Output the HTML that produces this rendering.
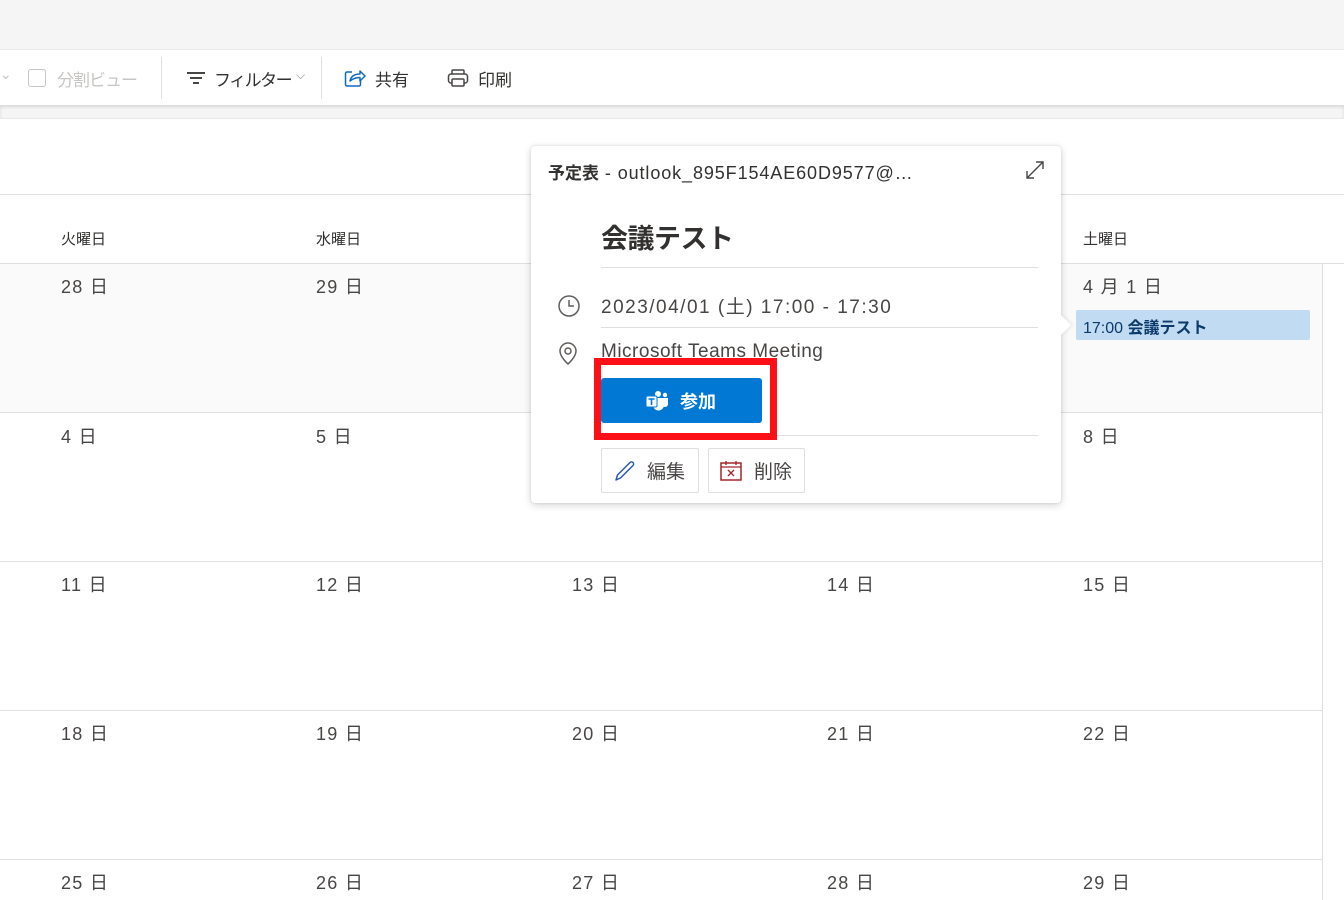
<!DOCTYPE html><html><head><meta charset="utf-8"><style>
*{margin:0;padding:0;box-sizing:border-box}
body{width:1344px;height:900px;overflow:hidden;background:#fff;font-family:"Liberation Sans","Noto Sans CJK JP",sans-serif;color:#323130;position:relative}
.a{position:absolute}
.hl{position:absolute;height:1px;background:#e1dfdd}
.d{position:absolute;font-size:18px;color:#484644;letter-spacing:1.3px}
.w{position:absolute;font-size:15px;color:#323130;top:228px}
</style></head><body>
<div class="a" style="left:0;top:0;width:1344px;height:49px;background:#f5f5f5"></div>
<div class="a" style="left:0;top:49px;width:1344px;height:1px;background:#e8e8e8"></div>
<div class="a" style="left:0;top:105px;width:1344px;height:13px;background:#f5f5f5;box-shadow:inset 0 2px 3px rgba(0,0,0,.12)"></div>
<div class="a" style="left:0;top:118px;width:1344px;height:1px;background:#e8e8e8"></div>
<!-- toolbar -->
<div class="a" style="left:0;top:66px;font-size:14px;color:#c8c6c4">⌄</div>
<div class="a" style="left:28px;top:69px;width:18px;height:18px;border:1.5px solid #c8c6c4;border-radius:3px"></div>
<div class="a" style="left:57px;top:66px;font-size:17px;color:#c8c6c4;letter-spacing:-1px">分割ビュー</div>
<div class="a" style="left:161px;top:57px;width:1px;height:42px;background:#e1dfdd"></div>
<div class="a" style="left:187px;top:72px;width:18px;height:13px">
<div class="a" style="left:0;top:0;width:18px;height:1.5px;background:#484644"></div>
<div class="a" style="left:3px;top:5px;width:12px;height:1.5px;background:#484644"></div>
<div class="a" style="left:6px;top:10px;width:6px;height:1.5px;background:#484644"></div></div>
<div class="a" style="left:214px;top:66px;font-size:17px;color:#323130;letter-spacing:-1.5px">フィルター</div>
<div class="a" style="left:296px;top:68px;font-size:12px;color:#8a8886">⌵</div>
<div class="a" style="left:321px;top:57px;width:1px;height:42px;background:#e1dfdd"></div>
<svg class="a" style="left:344px;top:68px" width="22" height="20" viewBox="0 0 22 20"><path d="M8 4H3a1.5 1.5 0 0 0-1.5 1.5v11A1.5 1.5 0 0 0 3 18h12a1.5 1.5 0 0 0 1.5-1.5V13" fill="none" stroke="#0f6cbd" stroke-width="1.5"/><path d="M6 13c1-5 5-7 10-7V3l5 5-5 5V9.5c-4 0-7 1-10 3.5z" fill="none" stroke="#0f6cbd" stroke-width="1.5" stroke-linejoin="round"/></svg>
<div class="a" style="left:375px;top:66px;font-size:17px">共有</div>
<svg class="a" style="left:447px;top:68px" width="22" height="20" viewBox="0 0 22 20"><rect x="5" y="2" width="12" height="5" rx="1" fill="none" stroke="#484644" stroke-width="1.5"/><rect x="1.5" y="6" width="19" height="9" rx="2.5" fill="#fff" stroke="#484644" stroke-width="1.5"/><rect x="5" y="11" width="12" height="7" rx="1" fill="#fff" stroke="#484644" stroke-width="1.5"/></svg>
<div class="a" style="left:478px;top:66px;font-size:17px">印刷</div>
<!-- calendar -->
<div class="hl" style="left:0;top:194px;width:1344px"></div>
<div class="w" style="left:61px">火曜日</div><div class="w" style="left:316px">水曜日</div><div class="w" style="left:1083px">土曜日</div>
<div class="hl" style="left:0;top:263px;width:1344px"></div>
<div class="a" style="left:0;top:264px;width:1322px;height:148px;background:#fafafa"></div>
<div class="hl" style="left:0;top:412px;width:1322px"></div>
<div class="hl" style="left:0;top:561px;width:1322px"></div>
<div class="hl" style="left:0;top:710px;width:1322px"></div>
<div class="hl" style="left:0;top:859px;width:1322px"></div>
<div class="a" style="left:1322px;top:264px;width:1px;height:636px;background:#e1dfdd"></div>
<div class="d" style="left:61px;top:273px">28 日</div><div class="d" style="left:316px;top:273px">29 日</div><div class="d" style="left:1083px;top:273px">4 月 1 日</div>
<div class="a" style="left:1076px;top:310px;width:234px;height:30px;background:#c0dbf2;border-radius:2px;font-size:16px;color:#0b3a6b;padding:4px 0 0 7px">17:00 <b>会議テスト</b></div>
<div class="d" style="left:61px;top:423px">4 日</div><div class="d" style="left:316px;top:423px">5 日</div><div class="d" style="left:1083px;top:423px">8 日</div>
<div class="d" style="left:61px;top:571px">11 日</div><div class="d" style="left:316px;top:571px">12 日</div><div class="d" style="left:572px;top:571px">13 日</div><div class="d" style="left:827px;top:571px">14 日</div><div class="d" style="left:1083px;top:571px">15 日</div>
<div class="d" style="left:61px;top:720px">18 日</div><div class="d" style="left:316px;top:720px">19 日</div><div class="d" style="left:572px;top:720px">20 日</div><div class="d" style="left:827px;top:720px">21 日</div><div class="d" style="left:1083px;top:720px">22 日</div>
<div class="d" style="left:61px;top:869px">25 日</div><div class="d" style="left:316px;top:869px">26 日</div><div class="d" style="left:572px;top:869px">27 日</div><div class="d" style="left:827px;top:869px">28 日</div><div class="d" style="left:1083px;top:869px">29 日</div>
<!-- popup -->
<div class="a" style="left:531px;top:146px;width:530px;height:357px;background:#fff;border-radius:4px;box-shadow:0 2px 8px rgba(0,0,0,.18),0 0 2px rgba(0,0,0,.1)"></div>
<div class="a" style="left:1054px;top:318px;width:14px;height:14px;background:#fff;transform:rotate(45deg);box-shadow:2px -2px 3px rgba(0,0,0,.06)"></div>
<div class="a" style="left:548px;top:159px;font-size:18px;color:#323130;white-space:nowrap;letter-spacing:0.9px"><b style="font-size:17px;letter-spacing:0">予定表</b> - outlook_895F154AE60D9577@…</div>
<svg class="a" style="left:1025px;top:160px" width="20" height="20" viewBox="0 0 20 20"><path d="M2 18L18 2M11 2h7v7M2 11v7h7" fill="none" stroke="#484644" stroke-width="1.4"/></svg>
<div class="a" style="left:601px;top:217px;font-size:27px;font-weight:bold;color:#323130;letter-spacing:-0.5px">会議テスト</div>
<div class="hl" style="left:601px;top:267px;width:437px"></div>
<svg class="a" style="left:557px;top:294px" width="24" height="24" viewBox="0 0 24 24"><circle cx="12" cy="12" r="10" fill="none" stroke="#605e5c" stroke-width="1.5"/><path d="M12 6v6h5" fill="none" stroke="#605e5c" stroke-width="1.5"/></svg>
<div class="a" style="left:601px;top:292px;font-size:19px;color:#484644;letter-spacing:1.5px">2023/04/01 (土) 17:00 - 17:30</div>
<div class="hl" style="left:601px;top:327px;width:437px"></div>
<svg class="a" style="left:557px;top:342px" width="22" height="24" viewBox="0 0 22 24"><path d="M11 22s-8-7-8-13a8 8 0 0 1 16 0c0 6-8 13-8 13z" fill="none" stroke="#605e5c" stroke-width="1.5"/><circle cx="11" cy="9" r="3" fill="none" stroke="#605e5c" stroke-width="1.5"/></svg>
<div class="a" style="left:601px;top:341px;font-size:19px;color:#484644;letter-spacing:0.5px">Microsoft Teams Meeting</div>
<div class="a" style="left:594px;top:358px;width:183px;height:82px;border:7px solid #fe1018;background:#fff"></div>
<div class="a" style="left:601px;top:378px;width:161px;height:45px;background:#0078d4;border-radius:3px;color:#fff;font-size:18px;font-weight:bold;padding:10px 0 0 79px">参加</div>
<svg class="a" style="left:645px;top:390px" width="24" height="22" viewBox="0 0 24 22"><circle cx="13" cy="4" r="3" fill="#fff"/><circle cx="20" cy="5" r="2.2" fill="#fff"/><path d="M8 8h11v7a5.5 5.5 0 0 1-11 0z" fill="#fff"/><path d="M17 8h6v6a3 3 0 0 1-6 0z" fill="#fff"/><rect x="1" y="6" width="11" height="11" rx="1.5" fill="#fff" stroke="#0078d4" stroke-width="1"/><path d="M3.5 9h6M6.5 9v6" stroke="#0078d4" stroke-width="1.6"/></svg>
<div class="hl" style="left:777px;top:435px;width:261px"></div>
<div class="a" style="left:601px;top:448px;width:98px;height:45px;border:1px solid #e1dfdd;border-radius:2px"></div>
<svg class="a" style="left:613px;top:459px" width="24" height="24" viewBox="0 0 24 24"><path d="M3 21l1.5-5L17 3.5a2 2 0 0 1 3 3L7.5 19z" fill="none" stroke="#2b59b0" stroke-width="1.5" stroke-linejoin="round"/></svg>
<div class="a" style="left:647px;top:457px;font-size:19px;color:#484644">編集</div>
<div class="a" style="left:708px;top:448px;width:97px;height:45px;border:1px solid #e1dfdd;border-radius:2px"></div>
<svg class="a" style="left:719px;top:459px" width="24" height="24" viewBox="0 0 24 24"><rect x="2" y="4" width="20" height="17" fill="none" stroke="#a4262c" stroke-width="1.5"/><path d="M2 8h20M7 2v4M17 2v4M9 11l6 6M15 11l-6 6" stroke="#a4262c" stroke-width="1.3"/></svg>
<div class="a" style="left:754px;top:457px;font-size:19px;color:#484644">削除</div>
</body></html>
